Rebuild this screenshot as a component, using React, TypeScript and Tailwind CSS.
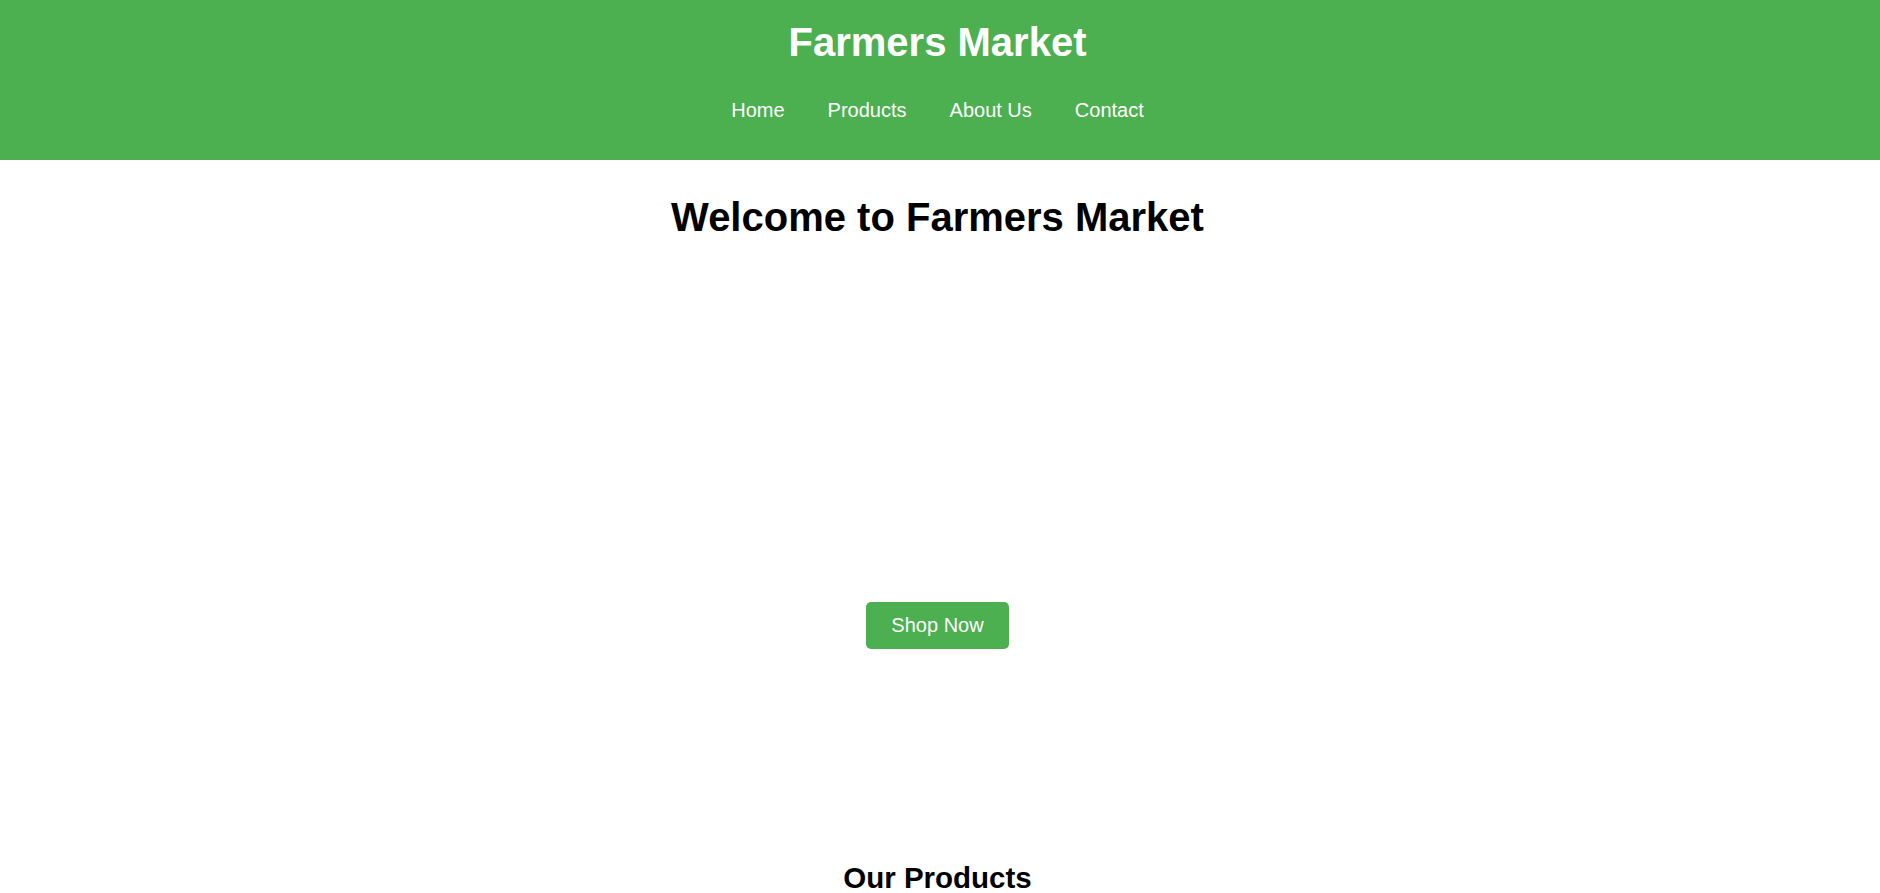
import React from "react";

const NAV_LINKS = ["Home", "Products", "About Us", "Contact"];

export default function App() {
  return (
    <div className="min-h-screen bg-white text-black" style={{ fontFamily: '"Liberation Sans", Arial, sans-serif' }}>
      <header className="bg-[#4CAF50] text-white">
        <div className="pr-[5px] pt-[19px] pb-[36px] flex flex-col items-center">
          <h1 className="text-[40px] font-bold leading-[46px]">Farmers Market</h1>
          <nav className="mt-[34px]">
            <ul className="flex items-center gap-[43px]">
              {NAV_LINKS.map((link) => (
                <li key={link}>
                  <a href="#" className="text-[20px] leading-[23px] text-white">
                    {link}
                  </a>
                </li>
              ))}
            </ul>
          </nav>
        </div>
      </header>

      <section className="pr-[5px] pt-[34px] flex flex-col items-center">
        <h2 className="text-[40px] font-bold leading-[46px]">Welcome to Farmers Market</h2>
        <button className="mt-[362px] h-[47px] px-[25px] rounded-[5px] bg-[#4CAF50] text-white text-[20px] leading-[23px]">
          Shop Now
        </button>
      </section>

      <section className="pr-[5px] pt-[212px] flex flex-col items-center">
        <h2 className="text-[29.5px] font-bold leading-[34px]">Our Products</h2>
        <div className="h-[300px]" />
      </section>
    </div>
  );
}
